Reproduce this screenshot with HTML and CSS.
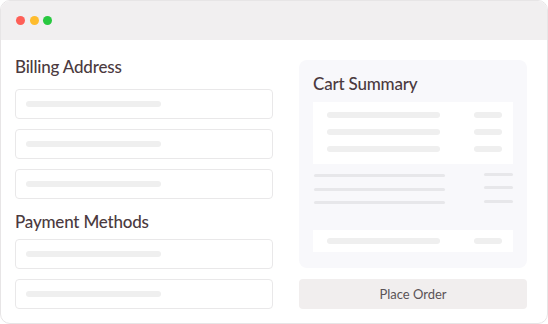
FILE: index.html
```html
<!DOCTYPE html>
<html lang="en">
<head>
  <meta charset="UTF-8">
  <meta name="viewport" content="width=device-width, initial-scale=1.0">
  <title>Checkout</title>
  <link rel="stylesheet" href="styles.css">
</head>
<body>
  <div class="window">
    <div class="titlebar">
      <span class="dot dot-red"></span>
      <span class="dot dot-yellow"></span>
      <span class="dot dot-green"></span>
    </div>

    <div class="content">
      <div class="form-col">
        <h2 class="heading">Billing Address</h2>
        <div class="fields">
          <div class="field"><span class="ph"></span></div>
          <div class="field"><span class="ph"></span></div>
          <div class="field"><span class="ph"></span></div>
        </div>

        <h2 class="heading heading-2">Payment Methods</h2>
        <div class="fields">
          <div class="field"><span class="ph"></span></div>
          <div class="field"><span class="ph"></span></div>
        </div>
      </div>

      <div class="cart-col">
        <div class="cart">
          <h2 class="heading cart-title">Cart Summary</h2>
          <div class="items">
            <div class="item-row"><span class="bar bar-long"></span><span class="bar bar-short"></span></div>
            <div class="item-row"><span class="bar bar-long"></span><span class="bar bar-short"></span></div>
            <div class="item-row"><span class="bar bar-long"></span><span class="bar bar-short"></span></div>
          </div>
          <div class="totals">
            <div class="total-row"><span class="line line-long"></span><span class="line line-short"></span></div>
            <div class="total-row"><span class="line line-long"></span><span class="line line-short"></span></div>
            <div class="total-row"><span class="line line-long"></span><span class="line line-short"></span></div>
          </div>
          <div class="grand">
            <span class="bar bar-long"></span><span class="bar bar-short"></span>
          </div>
        </div>
        <button class="btn-order">Place Order</button>
      </div>
    </div>
  </div>
</body>
</html>
```

FILE: styles.css
```css
* {
  box-sizing: border-box;
}
body {
  margin: 0;
  font-family: Lato, 'Noto Sans', sans-serif;
  background: #fff;
}
.window {
  width: 548px;
  height: 324px;
  border: 1px solid #e7e5e6;
  border-radius: 10px;
  overflow: hidden;
  background: #fff;
}
.titlebar {
  height: 39px;
  background: #f1eff0;
  display: flex;
  align-items: center;
  gap: 4.5px;
  padding-left: 15px;
}
.dot {
  width: 9px;
  height: 9px;
  border-radius: 50%;
}
.dot-red {
  background: #fe5f57;
}
.dot-yellow {
  background: #febc2e;
}
.dot-green {
  background: #28c840;
}
.content {
  display: flex;
  gap: 26px;
  padding: 0 20px 0 14px;
}
.form-col {
  width: 258px;
  padding-top: 15px;
}
.heading {
  margin: 0;
  font-size: 17px;
  font-weight: 500;
  line-height: 24px;
  letter-spacing: -0.2px;
  color: #4b3a40;
}
.heading-2 {
  margin-top: 11px;
}
.fields {
  display: flex;
  flex-direction: column;
  gap: 10px;
  margin-top: 10px;
}
.heading-2 + .fields {
  margin-top: 5px;
}
.field {
  height: 30px;
  border: 1px solid #e9e8e9;
  border-radius: 4px;
  display: flex;
  align-items: center;
  padding-left: 10px;
}
.ph {
  width: 135px;
  height: 6px;
  border-radius: 3px;
  background: #efefef;
}
.cart-col {
  width: 228px;
  padding-top: 20px;
  display: flex;
  flex-direction: column;
  gap: 11px;
}
.cart {
  height: 208px;
  background: #f8f8fb;
  border-radius: 8px;
  padding: 12px 14px 0 14px;
}
.cart-title {
  margin-bottom: 6px;
}
.items {
  background: #fff;
  padding: 10px 11px 12px 14px;
  display: flex;
  flex-direction: column;
  gap: 11px;
}
.item-row,
.grand,
.total-row {
  display: flex;
  justify-content: space-between;
}
.bar {
  height: 6px;
  border-radius: 3px;
  background: #efefef;
}
.bar-long {
  width: 113px;
}
.bar-short {
  width: 28px;
}
.totals {
  display: flex;
  flex-direction: column;
  gap: 10.5px;
  padding: 10px 0 0 1px;
  margin-bottom: 26px;
}
.line {
  height: 3px;
  border-radius: 2px;
  background: #e7e7ea;
}
.line-long {
  width: 131px;
}
.line-short {
  width: 29px;
  margin-top: -1.5px;
}
.grand {
  background: #fff;
  height: 22px;
  align-items: center;
  padding: 0 11px 0 14px;
}
.btn-order {
  height: 30px;
  border: none;
  border-radius: 4px;
  background: #f1eeee;
  color: #5a5356;
  font-family: Lato, 'Noto Sans', sans-serif;
  font-size: 13px;
  cursor: pointer;
}
```
